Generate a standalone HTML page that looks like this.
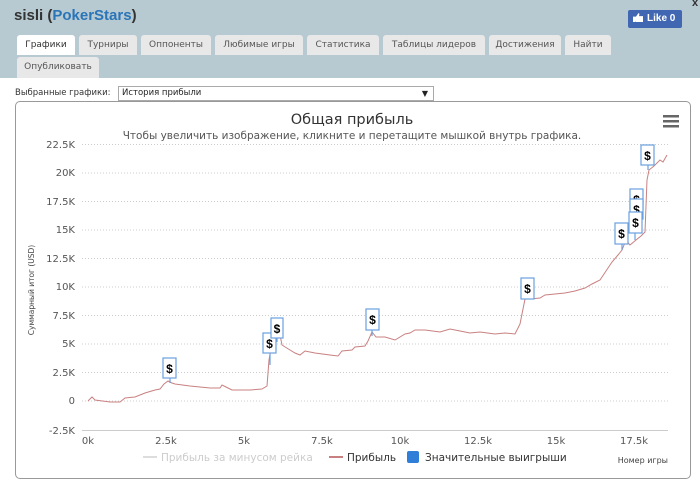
<!DOCTYPE html>
<html><head><meta charset="utf-8"><style>
body{margin:0;width:700px;height:492px;background:#fff;font-family:"Liberation Sans",sans-serif;position:relative;overflow:hidden}
.hdr{position:absolute;left:0;top:0;width:700px;height:78px;background:#b7c9d1}
.title{position:absolute;left:14px;top:7px;font-size:15px;font-weight:bold;color:#333}
.title span{color:#2a74b8}
.tab{position:absolute;height:20px;line-height:20px;font-size:9px;font-family:"DejaVu Sans",sans-serif;color:#555;background:#e8e8e8;border-radius:3px 3px 0 0;text-align:center}
.like{position:absolute;left:628px;top:10px;width:54px;height:18px;background:#4267b2;border-radius:2px;color:#fff;font-size:10px;font-weight:bold;line-height:18px}
.box{position:absolute;left:15px;top:101px;width:674px;height:376px;border:1px solid #999;border-radius:5px}
</style></head><body>
<div class="hdr"></div>
<div class="title">sisli (<span>PokerStars</span>)</div>
<div style="position:absolute;left:692px;top:-3px;font-size:11px;font-weight:bold;color:#333">x</div>
<div class="like"><span style="display:inline-block;width:10px;height:9px;background:#fff;margin:0 4px 0 5px;vertical-align:-1px;clip-path:polygon(0 40%,25% 40%,25% 100%,0 100%,0 40%,30% 40%,55% 0,65% 10%,60% 35%,100% 35%,100% 100%,30% 100%)"></span>Like 0</div>
<div class="tab" style="left:17px;top:35px;width:58px;background:#fff;color:#333">Графики</div>
<div class="tab" style="left:79px;top:35px;width:58px">Турниры</div>
<div class="tab" style="left:141px;top:35px;width:70px">Оппоненты</div>
<div class="tab" style="left:215px;top:35px;width:88px">Любимые игры</div>
<div class="tab" style="left:307px;top:35px;width:72px">Статистика</div>
<div class="tab" style="left:383px;top:35px;width:102px">Таблицы лидеров</div>
<div class="tab" style="left:489px;top:35px;width:72px">Достижения</div>
<div class="tab" style="left:565px;top:35px;width:46px">Найти</div>
<div class="tab" style="left:17px;top:57px;width:82px;height:21px">Опубликовать</div>
<div style="position:absolute;left:15px;top:88px;font-size:8.5px;font-family:'DejaVu Sans',sans-serif;color:#333">Выбранные графики:</div>
<div style="position:absolute;left:118px;top:86px;border:1px solid #aaa;font-size:8.5px;font-family:'DejaVu Sans',sans-serif;line-height:13px;color:#222;padding-left:3px;box-sizing:border-box;width:316px;height:15px">История прибыли<span style="position:absolute;right:5px;top:0;font-size:8px">▼</span></div>
<div class="box"></div>
<svg style="position:absolute;left:0;top:0" width="700" height="492" font-family="DejaVu Sans,sans-serif">
<text x="352" y="124" font-size="14.5" fill="#333" text-anchor="middle">Общая прибыль</text>
<text x="352" y="139" font-size="10.5" fill="#555" text-anchor="middle">Чтобы увеличить изображение, кликните и перетащите мышкой внутрь графика.</text>
<g fill="#666"><rect x="663" y="115" width="16" height="2.5"/><rect x="663" y="120" width="16" height="2.5"/><rect x="663" y="125" width="16" height="2.5"/></g>
<g stroke="#ccc" stroke-dasharray="1,2" stroke-width="1">
<line x1="82" x2="668" y1="144.5" y2="144.5"/><line x1="82" x2="668" y1="173" y2="173"/><line x1="82" x2="668" y1="201.5" y2="201.5"/><line x1="82" x2="668" y1="230" y2="230"/><line x1="82" x2="668" y1="258.5" y2="258.5"/><line x1="82" x2="668" y1="287" y2="287"/><line x1="82" x2="668" y1="315.5" y2="315.5"/><line x1="82" x2="668" y1="344" y2="344"/><line x1="82" x2="668" y1="372.5" y2="372.5"/><line x1="82" x2="668" y1="401" y2="401"/>
</g>
<line x1="82" x2="668" y1="430.5" y2="430.5" stroke="#ccc"/>
<g font-size="10" fill="#555" text-anchor="end">
<text x="75" y="148">22.5K</text><text x="75" y="176">20K</text><text x="75" y="205">17.5K</text><text x="75" y="233">15K</text><text x="75" y="262">12.5K</text><text x="75" y="290">10K</text><text x="75" y="319">7.5K</text><text x="75" y="347">5K</text><text x="75" y="376">2.5K</text><text x="75" y="404">0</text><text x="75" y="434">-2.5K</text>
</g>
<g font-size="10" fill="#555" text-anchor="middle">
<text x="88" y="444">0k</text><text x="166" y="444">2.5k</text><text x="244" y="444">5k</text><text x="322" y="444">7.5k</text><text x="400" y="444">10k</text><text x="478" y="444">12.5k</text><text x="556" y="444">15k</text><text x="634" y="444">17.5k</text>
</g>
<text transform="translate(34,290) rotate(-90)" font-size="7.5" fill="#444" text-anchor="middle">Суммарный итог (USD)</text>
<polyline fill="none" stroke="#c98080" stroke-width="1" points="88,401 92,397 95,400 110,402 120,402 125,398 135,397 145,393 155,390 160,389 164,384 168,381 172,383 175,384 190,386 210,388 220,388 222,385 226,387 232,390 250,390 262,389 267,386 269,360 272,343 276,338 279,330 282,345 290,350 295,353 300,355 305,351 315,353 330,355 338,356 342,351 352,350 355,347 365,346 368,341 372,332 376,337 385,337 395,340 405,334 410,333 415,330 425,330 440,332 450,329 460,331 470,333 480,332 495,334 505,333 515,334 520,324 524,304 527,290 530,299 540,298 545,295 555,294 565,293 575,291 585,288 592,284 600,280 606,271 612,262 618,255 622,250 626,240 630,245 636,240 641,236 645,232 647,180 649,170 654,166 660,160 663,162 667,155"/>
<g stroke="#6aa0e0" fill="#fff" stroke-width="1.2" font-size="12" font-weight="bold" text-anchor="middle" font-family="Liberation Sans,sans-serif">
<g><line x1="170" y1="378" x2="170" y2="383"/><rect x="163" y="358" width="13" height="20"/><text x="169.5" y="373" stroke="none" fill="#000">$</text></g>
<g><line x1="270" y1="354" x2="270" y2="365"/><rect x="263" y="333" width="13" height="20"/><text x="269.5" y="348" stroke="none" fill="#000">$</text></g>
<g><line x1="277" y1="338" x2="277" y2="342"/><rect x="271" y="318" width="12" height="20"/><text x="277" y="333" stroke="none" fill="#000">$</text></g>
<g><line x1="372" y1="330" x2="372" y2="336"/><rect x="366" y="309" width="13" height="21"/><text x="372.5" y="324" stroke="none" fill="#000">$</text></g>
<g><line x1="527" y1="299" x2="527" y2="290"/><rect x="521" y="278" width="13" height="21"/><text x="527.5" y="293" stroke="none" fill="#000">$</text></g>
<g><line x1="622" y1="244" x2="622" y2="250"/><rect x="615" y="223" width="13" height="21"/><text x="621.5" y="238" stroke="none" fill="#000">$</text></g>
<g><rect x="630" y="189" width="13" height="20"/><text x="636.5" y="204" stroke="none" fill="#000">$</text></g>
<g><rect x="630" y="199" width="13" height="20"/><text x="636.5" y="214" stroke="none" fill="#000">$</text></g>
<g><line x1="635" y1="233" x2="635" y2="240"/><rect x="629" y="212" width="13" height="21"/><text x="635.5" y="227" stroke="none" fill="#000">$</text></g>
<g><line x1="648" y1="165" x2="648" y2="170"/><rect x="641" y="145" width="13" height="20"/><text x="647.5" y="160" stroke="none" fill="#000">$</text></g>
</g>
<line x1="143" x2="157" y1="457" y2="457" stroke="#ddd" stroke-width="2"/>
<text x="161" y="461" font-size="10.5" fill="#ccc">Прибыль за минусом рейка</text>
<line x1="329" x2="343" y1="457" y2="457" stroke="#c98080" stroke-width="2"/>
<text x="347" y="461" font-size="10.5" fill="#333">Прибыль</text>
<rect x="407" y="451" width="12" height="12" rx="2" fill="#2f7ed8"/>
<text x="425" y="461" font-size="10.5" fill="#333">Значительные выигрыши</text>
<text x="668" y="463" font-size="8" fill="#444" text-anchor="end">Номер игры</text>
</svg>
</body></html>
